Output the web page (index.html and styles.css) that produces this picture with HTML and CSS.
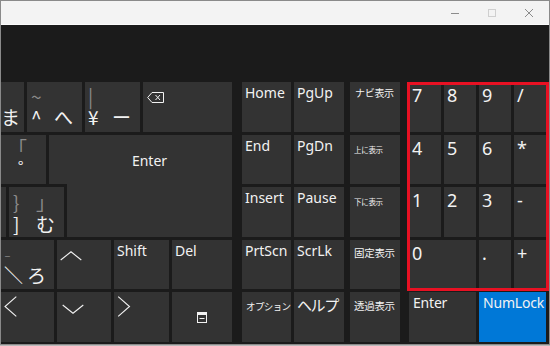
FILE: index.html
```html
<!DOCTYPE html>
<html lang="ja">
<head>
    <meta charset="UTF-8">
    <title>スクリーン キーボード</title>
    <link rel="stylesheet" href="styles.css">
</head>
<body>
<div class="window">
    <div class="titlebar">
        <span class="cap-btn">
            <svg width="10" height="10" viewBox="0 0 10 10"><path d="M1 5.5h8" stroke="#8c8c8c" stroke-width="1"/></svg>
        </span>
        <span class="cap-btn">
            <svg width="10" height="10" viewBox="0 0 10 10"><rect x="1.5" y="1.5" width="7" height="7" fill="none" stroke="#cfcfcf" stroke-width="1"/></svg>
        </span>
        <span class="cap-btn">
            <svg width="10" height="10" viewBox="0 0 10 10"><path d="M1 1l8 8M9 1l-8 8" stroke="#8c8c8c" stroke-width="1"/></svg>
        </span>
    </div>

    <div class="board">
        <!--メインキー（左側は画面外）-->
        <div class="main-keys">
            <div class="row">
                <div class="key jp w23 pad-ma"><div class="sub">&nbsp;</div><div class="main">ま</div></div>
                <div class="key jp w55 pad-a"><div class="sub"><span class="c1">~</span></div><div class="main"><span class="c1">^</span>へ</div></div>
                <div class="key jp w55 pad-b"><div class="sub"><span class="c1">|</span></div><div class="main"><span class="c1">¥</span>ー</div></div>
                <div class="key w89 icon-tl">
                    <svg width="17" height="11" viewBox="0 0 17 11"><path d="M5 .5h11.5v10H5L.7 5.5z" fill="none" stroke="#f2f2f2"/><path d="M8.5 3l4.5 5M13 3l-4.5 5" stroke="#f2f2f2"/></svg>
                </div>
            </div>

            <div class="enter-block">
                <div class="key jp k-bracket"><div class="sub">「</div><div class="main">゜</div></div>
                <div class="key k-enter-ext"></div>
                <div class="key k-enter"><span class="lbl">Enter</span></div>
                <div class="key k-edge"></div>
                <div class="key jp k-mu"><div class="sub"><span class="c1">}</span>」</div><div class="main"><span class="c1">]</span>む</div></div>
            </div>

            <div class="row short">
                <div class="key jp w53 pad-ro"><div class="sub"><span class="c1">_</span></div><div class="main"><span class="c1">＼</span>ろ</div></div>
                <div class="key w54 arrow-up">
                    <svg width="22" height="10" viewBox="0 0 22 10"><polyline points="0.7,9 11,0.8 21.3,9" fill="none" stroke="#f2f2f2" stroke-width="1.1"/></svg>
                </div>
                <div class="key w55"><span class="lbl">Shift</span></div>
                <div class="key w60"><span class="lbl">Del</span></div>
            </div>

            <div class="row">
                <div class="key w53 arrow-side">
                    <svg width="13" height="21" viewBox="0 0 13 21"><polyline points="12.3,0.7 1,10.5 12.3,20.3" fill="none" stroke="#f2f2f2" stroke-width="1.1"/></svg>
                </div>
                <div class="key w54 arrow-down">
                    <svg width="22" height="10" viewBox="0 0 22 10"><polyline points="0.7,1 11,9.2 21.3,1" fill="none" stroke="#f2f2f2" stroke-width="1.1"/></svg>
                </div>
                <div class="key w55 arrow-side">
                    <svg width="14" height="21" viewBox="0 0 14 21"><polyline points="1.2,0.7 12.5,10.5 1.2,20.3" fill="none" stroke="#f2f2f2" stroke-width="1.1"/></svg>
                </div>
                <div class="key w60 center">
                    <svg width="10" height="11" viewBox="0 0 10 11"><rect x=".5" y=".5" width="9" height="10" fill="none" stroke="#f2f2f2"/><rect x="1" y="1" width="8" height="2" fill="#f2f2f2"/><path d="M2.5 6.5h5" stroke="#f2f2f2"/></svg>
                </div>
            </div>
        </div>

        <!--ナビゲーション-->
        <div class="nav-keys">
            <div class="key"><span class="lbl">Home</span></div>
            <div class="key"><span class="lbl">PgUp</span></div>
            <div class="key tool"><span class="tiny t-navi">ナビ表示</span></div>

            <div class="key"><span class="lbl">End</span></div>
            <div class="key"><span class="lbl">PgDn</span></div>
            <div class="key tool"><span class="tiny t-up">上に表示</span></div>

            <div class="key"><span class="lbl">Insert</span></div>
            <div class="key"><span class="lbl">Pause</span></div>
            <div class="key tool"><span class="tiny t-up">下に表示</span></div>

            <div class="key"><span class="lbl">PrtScn</span></div>
            <div class="key"><span class="lbl">ScrLk</span></div>
            <div class="key tool"><span class="tiny t-fix">固定表示</span></div>

            <div class="key"><span class="tiny t-opt">オプション</span></div>
            <div class="key"><span class="help">ヘルプ</span></div>
            <div class="key tool"><span class="tiny t-fade">透過表示</span></div>
        </div>

        <!--テンキー-->
        <div class="numpad">
            <div class="key"><span class="num">7</span></div>
            <div class="key"><span class="num">8</span></div>
            <div class="key"><span class="num">9</span></div>
            <div class="key"><span class="num">/</span></div>

            <div class="key"><span class="num">4</span></div>
            <div class="key"><span class="num">5</span></div>
            <div class="key"><span class="num">6</span></div>
            <div class="key"><span class="num">*</span></div>

            <div class="key"><span class="num">1</span></div>
            <div class="key"><span class="num">2</span></div>
            <div class="key"><span class="num">3</span></div>
            <div class="key"><span class="num">-</span></div>

            <div class="key span2"><span class="num">0</span></div>
            <div class="key"><span class="num">.</span></div>
            <div class="key"><span class="num">+</span></div>

            <div class="key span2"><span class="lbl">Enter</span></div>
            <div class="key span2 on"><span class="lbl">NumLock</span></div>

            <div class="mark"></div>
        </div>
    </div>
</div>
</body>
</html>
```

FILE: styles.css
```css
* {
    margin: 0;
    padding: 0;
    box-sizing: border-box;
}

body {
    background-color: #b9b9b9;
    font-family: "Noto Sans", "Noto Sans CJK JP", sans-serif;
}

.window {
    width: 550px;
    height: 345px;
    border: 1px solid #8a8a8a;
    background-color: #1b1b1b;
    overflow: hidden;
}

.titlebar {
    height: 24px;
    background-color: #f3f3f3;
    border-bottom: 1px solid #fcfcfc;
    display: flex;
    justify-content: flex-end;
    padding-right: 2px;
}

.cap-btn {
    width: 37px;
    display: flex;
    align-items: center;
    justify-content: center;
}

.board {
    display: flex;
    align-items: flex-start;
    padding-top: 57px;
}

.key {
    background-color: #333;
    color: #f2f2f2;
}

/* 左側 */
.main-keys {
    width: 231px;
    display: flex;
    flex-direction: column;
    gap: 3px;
}

.row {
    display: flex;
    gap: 3px;
    height: 50px;
}

.row.short {
    height: 49px;
}

.w23 { width: 23px; }
.w53 { width: 53px; }
.w54 { width: 54px; }
.w55 { width: 55px; }
.w60 { width: 60px; }
.w89 { width: 89px; }

.enter-block {
    display: grid;
    grid-template-columns: 5px 3px 37px 3px 15px 3px 165px;
    grid-template-rows: 49px 50px;
    row-gap: 3px;
}

.k-bracket {
    grid-column: 1 / 4;
    grid-row: 1;
    padding: 2px 0 0 17px;
}

.k-bracket .sub {
    margin-left: -10px;
}

.k-enter-ext {
    grid-column: 5 / 7;
    grid-row: 1;
}

.k-enter {
    grid-column: 7;
    grid-row: 1 / 3;
    text-align: center;
    padding-top: 15px;
}

.k-edge {
    grid-column: 1;
    grid-row: 2;
}

.k-mu {
    grid-column: 3 / 6;
    grid-row: 2;
    padding: 3px 0 0 4px;
}

.k-mu .sub {
    line-height: 23px;
}

/* かな刻印 */
.jp {
    font-family: "Noto Sans CJK JP", sans-serif;
    font-size: 19px;
    line-height: 21px;
    white-space: nowrap;
    overflow: hidden;
}

.jp .sub {
    color: #8a8a8a;
}

.jp .c1 {
    display: inline-block;
    width: 23px;
}

.pad-ma {
    padding-top: 3px;
}

.pad-a {
    padding: 3px 0 0 4px;
}

.pad-b {
    padding: 3px 0 0 3px;
}

.pad-b .c1 {
    width: 24px;
}

.pad-ro {
    padding: 4px 0 0 3px;
}

.pad-ro .sub {
    font-family: "Noto Sans", sans-serif;
    font-size: 11px;
    line-height: 14px;
    padding-left: 1px;
}

.pad-ro .main {
    margin-top: 6px;
}

.icon-tl {
    padding: 4px 0 0 4px;
}

.arrow-up {
    padding: 4px 0 0 3px;
}

.arrow-down {
    padding: 5px 0 0 5px;
}

.arrow-side {
    padding: 4px 0 0 3px;
}

.center {
    display: flex;
    align-items: center;
    justify-content: center;
}

/* 英字ラベル */
.lbl {
    display: block;
    font-size: 14px;
    line-height: 16px;
    padding: 3px 0 0 3px;
    white-space: nowrap;
}

.k-enter .lbl {
    padding: 3px 0 0 0;
}

.num {
    display: block;
    font-size: 18px;
    line-height: 20px;
    padding: 3px 0 0 3px;
}

.tiny {
    display: block;
    font-family: "Noto Sans CJK JP", sans-serif;
    white-space: nowrap;
    letter-spacing: -0.3px;
}

.t-navi {
    font-size: 10px;
    line-height: 12px;
    padding: 5px 0 0 5px;
}

.t-up {
    font-size: 7.5px;
    line-height: 9px;
    padding: 10px 0 0 4px;
}

.t-fix {
    font-size: 10.5px;
    line-height: 12px;
    padding: 7px 0 0 4px;
}

.t-fade {
    font-size: 10.5px;
    line-height: 12px;
    padding: 8px 0 0 4px;
}

.t-opt {
    font-size: 9.5px;
    line-height: 11px;
    padding: 9px 0 0 4px;
    letter-spacing: -0.6px;
}

.help {
    display: block;
    font-family: "Noto Sans CJK JP", sans-serif;
    font-size: 15px;
    line-height: 18px;
    padding: 4px 0 0 3px;
    letter-spacing: -1.4px;
    white-space: nowrap;
}

/* ナビゲーション */
.nav-keys {
    margin-left: 10px;
    display: grid;
    grid-template-columns: 49px 50px 53px;
    grid-template-rows: 50px 49px 50px 49px 50px;
    gap: 3px;
}

.nav-keys .tool {
    margin-left: 3px;
}

/* テンキー */
.numpad {
    margin-left: 9px;
    position: relative;
    display: grid;
    grid-template-columns: repeat(4, 32px);
    grid-template-rows: 50px 49px 50px 49px 50px;
    gap: 3px;
}

.span2 {
    grid-column: span 2;
}

.numpad .on {
    background-color: #0078d7;
}

.numpad .lbl {
    padding-left: 4px;
    letter-spacing: -0.2px;
}

.mark {
    position: absolute;
    top: 0;
    left: -2px;
    right: -3px;
    bottom: 51px;
    border: 3px solid #e81123;
}
```
